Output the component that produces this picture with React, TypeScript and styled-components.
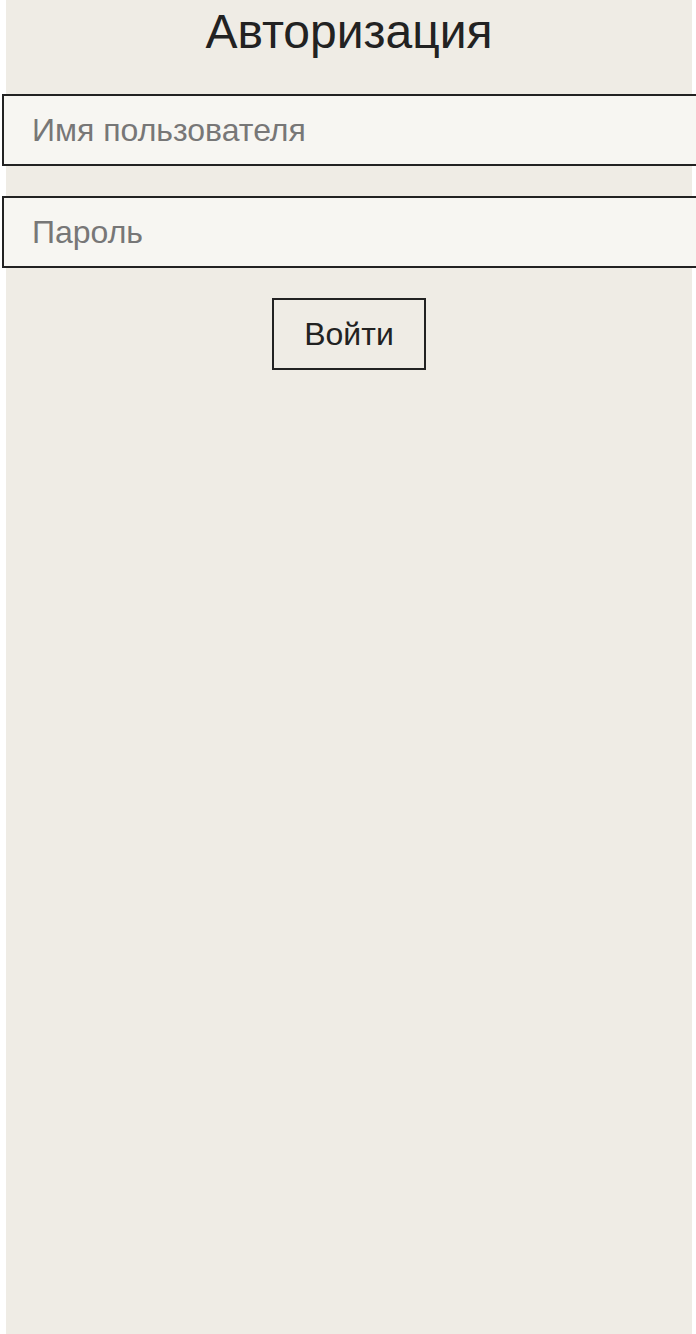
import React from "react";
import styled, { createGlobalStyle } from "styled-components";

const Global = createGlobalStyle`
  html, body { margin: 0; padding: 0; background: #ffffff; }
  body { font-family: "Liberation Sans", Arial, sans-serif; }
  * { box-sizing: border-box; }
`;

const Page = styled.div`
  width: 100%;
  min-height: 1334px;
  overflow: hidden;
  background: #ffffff;
`;

const Panel = styled.main`
  margin: 0 4px 0 6px;
  min-height: 1334px;
  background: #efece5;
  display: flex;
  flex-direction: column;
  align-items: center;
`;

const Title = styled.h1`
  margin: 0;
  padding-top: 4px;
  font-size: 48px;
  font-weight: 400;
  line-height: 55px;
  color: #222222;
  text-align: center;
`;

const Form = styled.form`
  align-self: stretch;
  margin-top: 35px;
  display: flex;
  flex-direction: column;
  align-items: center;
  gap: 30px;
`;

const Field = styled.input`
  align-self: flex-start;
  margin-left: -4px;
  width: calc(100% + 40px);
  height: 72px;
  padding: 0 28px;
  border: 2px solid #222222;
  border-radius: 0;
  background: #f7f6f2;
  font-family: "Liberation Sans", Arial, sans-serif;
  font-size: 32px;
  color: #222222;
  outline: none;
  &::placeholder { color: #777777; font-family: "Liberation Sans", Arial, sans-serif; }
`;

const Submit = styled.button`
  height: 72px;
  padding: 0 30px;
  border: 2px solid #222222;
  border-radius: 0;
  background: transparent;
  font-family: "Liberation Sans", Arial, sans-serif;
  font-size: 32px;
  color: #222222;
  cursor: pointer;
`;

export default function App() {
  return (
    <Page>
      <Global />
      <Panel>
        <Title>Авторизация</Title>
        <Form onSubmit={(e) => e.preventDefault()}>
          <Field type="text" placeholder="Имя пользователя" />
          <Field type="password" placeholder="Пароль" />
          <Submit type="submit">Войти</Submit>
        </Form>
      </Panel>
    </Page>
  );
}
